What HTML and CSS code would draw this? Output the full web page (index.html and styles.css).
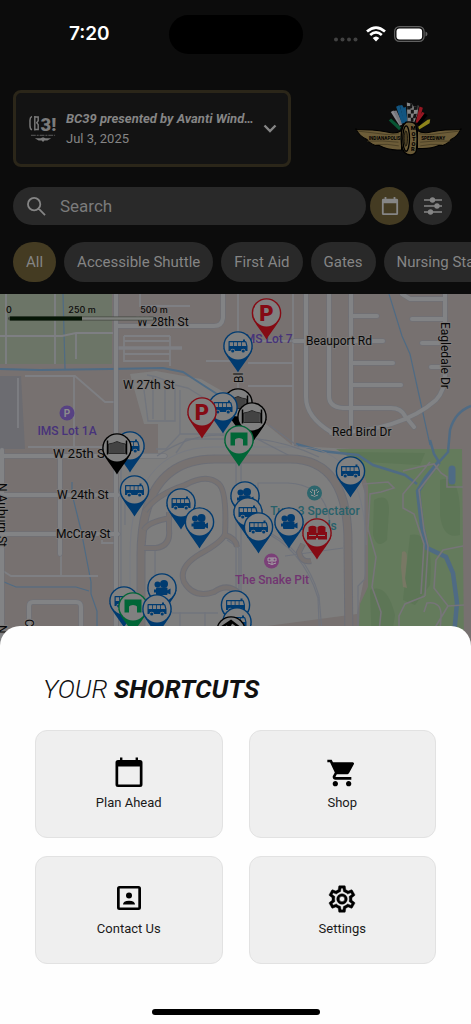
FILE: index.html
```html
<!DOCTYPE html>
<html lang="en">
<head>
    <meta charset="UTF-8">
    <meta name="viewport" content="width=device-width, initial-scale=1.0">
    <title>IMS Map</title>
    <link rel="stylesheet" href="styles.css">
</head>
<body>
    <header class="top">
        <div class="status-bar">
            <span class="time">7:20</span>
            <span class="island"></span>
            <span class="status-icons">
                <svg class="dots" viewBox="0 0 24 5"><circle cx="2" cy="2.5" r="2"/><circle cx="8.5" cy="2.5" r="2"/><circle cx="15" cy="2.5" r="2"/><circle cx="21.5" cy="2.5" r="2"/></svg>
                <svg class="wifi" viewBox="0 0 20 16" fill="none" stroke="#fff" stroke-width="2.700"><path d="M1 5.600Q10-2.400 19 5.600M4.200 9Q10 3.800 15.800 9"/><path d="M10 15.500 6.700 12Q10 9 13.300 12Z" fill="#fff" stroke="none"/></svg>
                <svg class="battery" viewBox="0 0 34 16"><rect x=".6" y=".6" width="29.500" height="14.800" rx="4.800" fill="none" stroke="#606060" stroke-width="1.200"/><rect x="2.500" y="2.500" width="25.600" height="11" rx="3" fill="#fff"/><path d="M31.500 5.500q2 .8 2 2.500t-2 2.500z" fill="#606060"/></svg>
            </span>
        </div>

        <div class="event-row">
            <button class="event">
                <svg class="event-logo" viewBox="0 0 30 30">
                    <path d="M3 2Q1 3 1 6v5q0 4 2 5M6 1.500v15M6 2.500h3.500v4l-1.500 2 1.500 2v5H6" fill="none" stroke="#7b7b7b" stroke-width="1.500"/>
                    <text x="12" y="17" class="event-mark">3!</text>
                    <path d="M2 21.500h25" stroke="#5e5e5e" stroke-width="1" stroke-dasharray="5 1 2 1"/>
                    <path d="M6 24.500h6l2.500-1 2.500 1h6l-4 2.500h-3l-1.500 1.500L13 27h-3z" fill="#7b7b7b"/>
                </svg>
                <span class="event-text">
                    <span class="event-name">BC39 presented by Avanti Wind…</span>
                    <span class="event-date">Jul 3, 2025</span>
                </span>
                <svg class="chevron" viewBox="0 0 14 9"><path d="m1.500 1.500 5.500 5.500 5.500-5.500" fill="none" stroke="#858585" stroke-width="2.400"/></svg>
            </button>
            <svg class="ims-logo" viewBox="46 50 320 164" role="img" aria-label="Indianapolis Motor Speedway">
                <path d="m147 108 7-6 30 27-6 8z" fill="#075433"/>
                <path d="m153 83 8-5 26 42-8 4z" fill="#8a8a8f"/>
                <path d="m161 80 9-2 18 38-8 4z" fill="#77777d"/>
                <path d="m169 67 10-5 16 52-9 4z" fill="#125580"/>
                <path d="m180 63 7-1 5 8 6-3 5 46-10 3z" fill="#125580"/>
                <path d="m201 54 15 4 6 9 14-4-3 26-10 24h-20z" fill="#858585"/>
                <path d="M202 65h10v10h-10zM212 55l6 5-1 12-7-1zM213 76h9v11h-9zM222 67l12-3-1 12-11 1zM204 88h9v12h-9zM222 89l9-1-4 14-8-2zM213 100h8v12h-8z" fill="#151515"/>
                <path d="m239 66 10 4-8 28-13 14z" fill="#961722"/>
                <path d="m247 83 7 3-19 30-8-3z" fill="#961722"/>
                <path d="m255 87 8 5-25 33-8-7z" fill="#000"/>
                <path d="m263 106 8-2-2 12-31 19-3-8z" fill="#8e841b"/>
                <path d="M48 135q55 0 90 7 30 8 47-4v58h-13q-29 0-55-14l-10 1q-20-8-25-18-24-10-34-34z" fill="#6c5c38" stroke="#000" stroke-width="3"/>
                <path d="M363 135q-52 0-86 7-29 7-44-4v54h15q27 0 50-10l10 1q20-8 25-18 22-10 30-34z" fill="#6c5c38" stroke="#000" stroke-width="3"/>
                <path d="M55 140q48 5 84 10l39-2M82 170q43-3 94 3M107 180q36-3 70 4M357 140q-46 5-82 10l-37-2M331 170q-42-3-90 3M307 180q-35-3-66 4" fill="none" stroke="#3f361f" stroke-width="2"/>
                <path d="M199 113q22-3 29 9 7 36 1 78-8 15-27 9-18-7-18-48 0-38 15-48z" fill="#6c5c38" stroke="#000" stroke-width="4"/>
                <ellipse cx="199" cy="162" rx="10" ry="38" fill="none" stroke="#000" stroke-width="4"/>
                <ellipse cx="198" cy="162" rx="5" ry="23" fill="#4c4024" stroke="#000" stroke-width="2"/>
                <text x="87" y="165" class="logo-text">INDIANAPOLIS</text>
                <text x="244" y="165" class="logo-text">SPEEDWAY</text>
                <g class="logo-motor"><text x="220" y="137">M</text><text x="221" y="153">O</text><text x="222" y="168">T</text><text x="221" y="183">O</text><text x="219" y="199">R</text></g>
            </svg>
        </div>

        <div class="search-row">
            <label class="search">
                <svg viewBox="0 0 20 20"><path d="M12 12l7 7M14 7.500a6.500 6.500 0 1 1-13 0 6.500 6.500 0 0 1 13 0z" fill="none" stroke="#858585" stroke-width="1.900"/></svg>
                <input type="search" placeholder="Search" aria-label="Search">
            </label>
            <button class="round gold" aria-label="Calendar">
                <svg viewBox="0 0 18 20"><path d="M3 0h2v2h8V0h2v2h1.500Q18 2 18 3.500v15q0 1.500-1.500 1.500h-15Q0 20 0 18.500v-15Q0 2 1.500 2H3zM2 7v11h14V7z" fill="#858585" fill-rule="evenodd"/></svg>
            </button>
            <button class="round" aria-label="Filters">
                <svg viewBox="0 0 18 18"><path d="M0 3h18M0 9h18M0 15h18" stroke="#858585" stroke-width="1.700"/><g fill="#858585"><circle cx="8.500" cy="3" r="2.700"/><circle cx="13" cy="9" r="2.700"/><circle cx="6.500" cy="15" r="2.700"/></g></svg>
            </button>
        </div>

        <nav class="chips">
            <button class="chip gold">All</button>
            <button class="chip">Accessible Shuttle</button>
            <button class="chip">First Aid</button>
            <button class="chip">Gates</button>
            <button class="chip">Nursing Station</button>
        </nav>
    </header>

    <main class="map">
        <svg class="map-canvas" viewBox="0 294 471 352" preserveAspectRatio="xMidYMin slice">
            <defs>
                <g id="pin">
                    <path d="M-14.500 2C-13 10-5 18 0 26.500 5 18 13 10 14.500 2z"/>
                    <circle r="14.800"/>
                    <circle r="13.400" fill="#808080"/>
                </g>
                <g id="bus">
                    <use href="#pin" fill="#003b70"/>
                    <path d="M-9-5H5V-6.500H7V-5q1.200 0 1.500 1L9.500 0v5H7.500a2.300 2.300 0 0 0-4.600 0H-3a2.300 2.300 0 0 0-4.600 0H-9.500v-9.500zM-8.300-3.800V0h3.500v-3.800zM-4-3.800V0H-.8v-3.800zM0-3.800V0h3.200v-3.800zM4-3.800V0h4.300L7.300-3.800z" fill="#003b70" fill-rule="evenodd"/>
                    <circle cx="-5.300" cy="5" r="1.600" fill="#003b70"/>
                    <circle cx="5.200" cy="5" r="1.600" fill="#003b70"/>
                </g>
                <g id="camera">
                    <use href="#pin" fill="#003b70"/>
                    <g fill="#003b70"><circle cx="-4.500" cy="-3.500" r="3"/><circle cx="2" cy="-4" r="4"/><rect x="-6" y="-.5" width="11.500" height="7.500" rx="1"/><path d="m4 3 4.500-2.500v6L4 4.500zM-8 1.500h3v3h-3z"/></g>
                </g>
                <g id="gate">
                    <use href="#pin" fill="#000"/>
                    <path d="M-9.500-7.500v14M9.500-7.500v14" stroke="#000" stroke-width="1.500"/>
                    <path d="M-8.500-4Q-4-4.500 0-6.500 4-4.500 8.500-4v9.500h-17z" fill="#4d4d4d" stroke="#1b1b1b" stroke-width=".8"/>
                    <path d="M-6-4V5M-4-4V5M-2-5V5M0-6V6M2-5V5M4-4V5M6-4V5" stroke="#2c2c2c" stroke-width=".6"/>
                </g>
                <g id="tunnel">
                    <use href="#pin" fill="#006637"/>
                    <path d="M-8.500-7.500h17v13H4V-.5Q3-2 0-2T-4-.5v6h-4.500z" fill="#006637"/>
                </g>
                <g id="parking">
                    <use href="#pin" fill="#850b14"/>
                    <text y="8" class="pin-letter">P</text>
                </g>
                <g id="seats">
                    <use href="#pin" fill="#850b14"/>
                    <path d="M-8.500-6q4-2.500 8 0v8h-8zM.5-6q4-2.500 8 0v8h-8zM-10-1h2v4H-1V0H1v3h7v-4h2v7.500H1V5h-2v1.500h-9z" fill="#850b14"/>
                </g>
                <!-- every street is drawn twice, casing and fill -->
                <g id="streets">
                    <path d="M116 294v352M2 450v196M60 454v100M0 456h165M0 495h118M0 534h118M116 326h98q8 0 9-8v-24"/>
                    <path d="M306 294v103q0 20 25 35M329 294v102q0 11 14 12h48q10 0 14 8l9 11M351 294v137M331 433q70-2 105-33 9-10 9-25v-81"/>
                    <path d="M351 316h26M351 341h32M351 363h42M351 385h50M412 319h33M422 343h22M431 367h13M294 341h12M402 294l8 5h34M29 646v-40q0-4 4-4h43q5 0 5 5v39"/>
                </g>
                <path id="track" d="M141 646v-90Q141 459 215 459h75q59 0 58 86l1 101"/>
                <g id="infield">
                    <path d="M145 511q12-17 40-26 22-12 34-1 8 8 6 50-3 8-25 20-22 13-16 28 10 17 30 10 14-10 26 2"/>
                    <path d="M144 548h12q15-2 13-19v-17M144 530q4-8 26-12M225 535q11 3 12 12"/>
                </g>
            </defs>

            <!-- land -->
            <rect y="294" width="471" height="352" fill="#777170"/>
            <path d="M0 294h112v70H0z" fill="#6c7567"/>
            <path d="M0 376h21l4 73H0z" fill="#6c6c71"/>
            <path d="M119 646V453h39V424H144l-14-50 26-3 45 8 35 20 30 25 27 22 21 1 38 2 13 45v80l-8 40z" fill="#7e7e7e"/>
            <path d="M336 449h126l2 197H358l2-42 8-17V486l-8-22z" fill="#647b5c"/>
            <g fill="#5d7656"><path d="M345 452l80 1-5 12-55-3zM374 500q15-8 15 10l-2 30q-10 10-14-5zM410 535q25-5 20 50l-15 20-12-5zM440 480q20-8 20 35v20q-17 5-20-20zM370 590q17-8 25 25l-5 31h-18z"/></g>
            <path d="M402 552q5-3 5 6l-2 20 2 10-4-1-2-20z" fill="#787864"/>

            <!-- water -->
            <g fill="none" stroke="#4f6b84">
                <path d="M0 369l40 1 70-1 53-1 20 4 20 13 14 9" stroke-width="2"/>
                <path d="M63 294l2 75M389 294l13 42 8 18 20 91" stroke-width="1.200"/>
                <path d="M72 482v12l9 36 10 52v12l6 17v30M4 582l12 5h60l13 4" stroke-width="1.200"/>
                <path d="M296 444l25 7 37 4 15 10 32 10 12 9" stroke-width="2.500"/>
                <path d="M430 440l4 14 5 8 9-10 2-22q5-18 21-24" stroke-width="2.500"/>
                <path d="M439 462l-13 16-8 13 4 35 5 22 19 9 7 16 4 30-4 43" stroke-width="4.500"/>
                <path d="M452 469v12" stroke-width="7" stroke-linecap="round"/>
            </g>

            <!-- minor roads -->
            <g fill="none" stroke="#7e7f83" stroke-width="1.800">
                <path d="M6 294v70M55 294v70M76 333v26M0 336h62l14-3h37M25 376h50l30 26h10M18 378v50M74 376v70M28 447h84M124 336h46M124 341h46M124 354h46M124 361h46M124 336v26M170 336v30M140 294v12h50M293 294v155M238 294v130M206 361h30M248 363h45M248 386h45M248 341h45M3 571l8 5h87M61 554v22M102 540v3h15"/>
                <path d="M114 348h68" stroke-width="3.500"/>
            </g>
            <g fill="none" stroke="#71757d" stroke-width="1.300">
                <path d="M144 390l4 31h27v-32q-10-12-28-14M175 385l13 3 16 10 17 12M153 377v42M165 382v38M180 390v44l-14 15h-10M180 434h60M176 453l10-14h50M180 612v34M205 612v34M165 613h53M121 450v190M125 500v25"/>
            </g>

            <use href="#streets" class="street-casing"/>
            <use href="#streets" class="street-fill"/>

            <!-- speedway track and infield roads -->
            <g fill="none">
                <path d="M130 646v-90Q130 448 213 447h85q66 0 68 98" stroke="#777a82"/>
                <path d="M157 456q40-27 80-19 45 2 82 20M236 460v186M241 462v184M258 505v-22h30q38 2 42 40M227 540l12 8v80M260 530q43 18 58 68l2 48M264 530q41 18 55 66l4 48M285 556l58-8M365 485v94l-7 7v40M155 550v36M240 430l50 26M269 425l30 22" stroke="#6f737c" stroke-width="1.200"/>
                <use href="#track" stroke="#6c6e76" stroke-width="9"/>
                <use href="#track" stroke="#777271" stroke-width="7"/>
                <use href="#infield" stroke="#6c6e76" stroke-width="6"/>
                <use href="#infield" stroke="#777271" stroke-width="4"/>
                <path d="M303 544l-4 8q2 11 12 9" stroke="#6c6e76" stroke-width="6"/>
                <path d="M303 544l-4 8q2 11 12 9" stroke="#777271" stroke-width="4"/>
            </g>

            <!-- park paths -->
            <g fill="none" stroke="#777579" stroke-width="1.600">
                <path d="M363 484l25-2 6 6-13 4-11 2-2 35 8 28-4 30 9 25-3 30M430 462l-10 12-17 20v14l11 6 10 30-3 50M403 471l16-4 15-3 7 9 6 4v10h16M439 464l-20 26 5 40 4 16-3 50M463 546l-20 4-7 10-2 28 14 18 16-1M448 606l-12 20 4 20M425 596l-20 8-6 12v30M424 612l3-9q15-2 14 14l-2 29"/>
            </g>

            <!-- places -->
            <g class="place">
                <circle cx="67" cy="413" r="7.500" fill="#574283"/>
                <text x="67" y="417" class="place-icon">P</text>
                <text x="67" y="435" fill="#47337a">IMS Lot 1A</text>
                <text x="267" y="343" fill="#47337a">IMS Lot 7</text>
                <circle cx="314.500" cy="493" r="7.500" fill="#2d666d"/>
                <path d="M311 495q3 1 3.500 1.500.5-.5 3.500-1.500M314.500 495v-5M310 491l2 2M319 491l-2 2M312 489l1 2M317 489l-1 2" stroke="#989898" fill="none"/>
                <text x="315" y="515" fill="#28616a">Turn 3 Spectator</text>
                <text x="315" y="530" fill="#28616a">Mounds</text>
                <circle cx="271.500" cy="561" r="7.500" fill="#7b4078"/>
                <path d="M268 558h3v3h-3zM273 558h3v3h-3zM268 563q4 3 8 0M272 557v7" stroke="#a5a5a5" fill="none"/>
                <text x="272" y="584" fill="#713571">The Snake Pit</text>
            </g>
            <g class="street-name">
                <text x="137" y="326">W 28th St</text>
                <text x="123" y="389">W 27th St</text>
                <text x="53" y="458" class="major">W 25th St</text>
                <text x="57" y="499">W 24th St</text>
                <text x="56" y="538">McCray St</text>
                <text x="306" y="345">Beauport Rd</text>
                <text x="332" y="436">Red Bird Dr</text>
                <text transform="translate(441 322) rotate(90)">Eagledale Dr</text>
                <text transform="translate(-2 483) rotate(90)">N Auburn St</text>
                <text transform="translate(243 383) rotate(-90)">Bl</text>
                <text transform="translate(25 619) rotate(90)">Ct</text>
                <text transform="translate(-2 625) rotate(90)">N</text>
            </g>

            <!-- scale -->
            <path d="M10 318.500h143" stroke="#454842" stroke-width="4" stroke-linecap="round"/>
            <path d="M82 318.500h71" stroke="#7e807d" stroke-width="2.500"/>
            <path d="M10 318.500h72" stroke="#051505" stroke-width="4"/>
            <g class="scale"><text x="9" y="313">0</text><text x="82" y="313">250 m</text><text x="154" y="313">500 m</text></g>

            <!-- pins -->
            <use href="#parking" x="266.500" y="313"/>
            <use href="#bus" x="238" y="346"/>
            <use href="#gate" x="238" y="403"/>
            <use href="#bus" x="223" y="407"/>
            <use href="#parking" x="202" y="412"/>
            <use href="#gate" x="252" y="417"/>
            <use href="#tunnel" x="239" y="440"/>
            <use href="#bus" x="130" y="446"/>
            <use href="#gate" x="117" y="448"/>
            <use href="#bus" x="350.500" y="471"/>
            <use href="#bus" x="134.500" y="490"/>
            <use href="#camera" x="245" y="496"/>
            <use href="#bus" x="181" y="503"/>
            <use href="#bus" x="248" y="512"/>
            <use href="#camera" x="199.500" y="522"/>
            <use href="#camera" x="289" y="522"/>
            <use href="#bus" x="258.500" y="527"/>
            <use href="#seats" x="317" y="533"/>
            <use href="#camera" x="162" y="588"/>
            <use href="#bus" x="124" y="601"/>
            <use href="#bus" x="235.500" y="605"/>
            <use href="#tunnel" x="133" y="607"/>
            <use href="#bus" x="157" y="609"/>
            <use href="#bus" x="237" y="622"/>
            <g transform="translate(231 631)">
                <use href="#pin"/>
                <path d="M-9-4 0-10 9-3M-4-7 5 0M1-9-6 0" fill="none" stroke="#000" stroke-width="2.500"/>
            </g>
        </svg>
    </main>

    <section class="sheet">
        <h1>YOUR <b>SHORTCUTS</b></h1>
        <div class="shortcuts">
            <button class="shortcut">
                <svg viewBox="0 0 32 32"><path d="M7 .5h2.400V3h13.200V.5H25V3h2q2.500 0 2.500 2.500v22q0 2.500-2.500 2.500H5q-2.500 0-2.500-2.500v-22Q2.500 3 5 3h2zM5.200 9.500V27q0 .5.500.5h20.600q.5 0 .5-.5V9.500z" fill-rule="evenodd"/></svg>
                <span>Plan Ahead</span>
            </button>
            <button class="shortcut">
                <svg viewBox="0 0 24 24"><path d="M7 18c-1.100 0-2 .9-2 2s.9 2 2 2 2-.9 2-2-.9-2-2-2zM1 2v2h2l3.600 7.590-1.350 2.450c-.16.280-.25.610-.25.960 0 1.100.9 2 2 2h12v-2H7.420c-.14 0-.25-.11-.25-.25l.03-.12.9-1.630h7.450c.75 0 1.410-.41 1.750-1.030l3.580-6.490A1 1 0 0 0 20 4H5.210l-.94-2H1zm16 16c-1.100 0-2 .9-2 2s.9 2 2 2 2-.9 2-2-.9-2-2-2z"/></svg>
                <span>Shop</span>
            </button>
            <button class="shortcut">
                <svg viewBox="0 0 32 32"><path d="M6.500 3h19Q28 3 28 5.500v19q0 2.500-2.500 2.500h-19Q4 27 4 24.500v-19Q4 3 6.500 3zm.2 2.500v19h18.600v-19zM10 21.500q0-3.800 6-3.800t6 3.800z" fill-rule="evenodd"/><circle cx="16" cy="12.500" r="3"/></svg>
                <span>Contact Us</span>
            </button>
            <button class="shortcut">
                <svg viewBox="0 0 24 24"><path d="M19.430 12.980c.04-.32.070-.64.070-.98s-.03-.66-.07-.98l2.110-1.650c.19-.15.240-.42.120-.64l-2-3.460a.5.5 0 0 0-.61-.22l-2.490 1c-.52-.4-1.080-.73-1.690-.98l-.38-2.650A.49.490 0 0 0 14 2h-4c-.25 0-.46.180-.49.420l-.38 2.650c-.61.250-1.170.590-1.690.98l-2.490-1a.5.5 0 0 0-.61.220l-2 3.460c-.13.220-.07.490.12.640l2.110 1.650c-.04.320-.07.650-.07.980s.03.660.07.980l-2.110 1.650c-.19.150-.24.420-.12.640l2 3.460c.12.220.39.300.61.220l2.490-1c.52.400 1.080.730 1.690.980l.38 2.650c.03.240.24.420.49.420h4c.25 0 .46-.18.490-.42l.38-2.650c.61-.25 1.170-.59 1.690-.98l2.490 1a.5.5 0 0 0 .61-.22l2-3.460c.12-.22.070-.49-.12-.64zm-1.980-1.710c.07.500.07.960 0 1.460l-.14 1.130 1.970 1.540-.7 1.210-2.310-.92-.91.700c-.43.320-.84.560-1.250.730l-1.060.43-.36 2.450h-1.380l-.35-2.450-1.060-.43a5.700 5.700 0 0 1-1.230-.71l-.91-.72-2.340.93-.7-1.210 1.970-1.540-.14-1.130c-.07-.52-.07-.97 0-1.470l.14-1.130-1.970-1.540.7-1.210 2.310.92.910-.7c.43-.32.840-.56 1.250-.73l1.060-.43.360-2.450h1.380l.35 2.450 1.060.43c.43.180.83.410 1.230.71l.91.720 2.340-.93.700 1.210-1.970 1.540zM12 8a4 4 0 1 0 0 8 4 4 0 0 0 0-8zm0 6a2 2 0 1 1 0-4 2 2 0 0 1 0 4z" stroke="#000" stroke-width=".3"/></svg>
                <span>Settings</span>
            </button>
        </div>
        <div class="home-bar"></div>
    </section>
</body>
</html>
```
FILE: styles.css
```css
* {
    box-sizing: border-box;
}
body {
    margin: 0;
    min-height: 100vh;
    display: flex;
    flex-direction: column;
    font-family: Roboto, "Liberation Sans", sans-serif;
    background: #0c0c0c;
    overflow-x: hidden;
}
button {
    font-family: inherit;
    border: none;
    padding: 0;
    cursor: pointer;
}
svg {
    display: block;
    flex-shrink: 0;
}

/* header */
.top {
    background: #0c0c0c;
    color: #858585;
    padding-bottom: 12px;
}
.status-bar {
    height: 68px;
    display: grid;
    grid-template-columns: 1fr 134px 1fr;
    align-items: center;
}
.time {
    color: #fff;
    font: 600 19px/24px Inter, sans-serif;
    text-align: center;
    padding-left: 10px;
}
.island {
    height: 39px;
    border-radius: 20px;
    background: #000;
}
.status-icons {
    display: flex;
    align-items: center;
    justify-content: flex-end;
    gap: 8px;
    padding-right: 43px;
}
.dots {
    width: 24px;
    height: 5px;
    fill: #424242;
    margin-top: 10px;
}
.wifi {
    width: 20px;
    height: 16px;
}
.battery {
    width: 34px;
    height: 16px;
}
.event-row {
    display: flex;
    justify-content: space-between;
    align-items: center;
    padding: 22px 9px 20px 13px;
}
.event {
    flex: 0 1 278px;
    min-width: 0;
    height: 77px;
    display: flex;
    align-items: center;
    gap: 8px;
    padding: 0 11px 0 13px;
    border: 3px solid #2b2619;
    border-radius: 8px;
    background: #131313;
    color: #858585;
    text-align: left;
}
.event-logo {
    width: 29px;
    height: 30px;
}
.event-mark {
    font: 900 19px Roboto, sans-serif;
    fill: #7b7b7b;
}
.event-text {
    flex: 1;
    min-width: 0;
    display: flex;
    flex-direction: column;
}
.event-name,
.event-date {
    font-size: 13px;
    line-height: 20px;
    white-space: nowrap;
}
.event-name {
    font-weight: 700;
    font-style: italic;
}
.chevron {
    width: 14px;
    height: 9px;
}
.ims-logo {
    width: 107px;
    height: 55px;
}
.logo-text {
    font: 700 14px Roboto, sans-serif;
    fill: #000;
}
.logo-motor {
    font: 900 17px Roboto, sans-serif;
    fill: #000;
    text-anchor: middle;
}
.search-row {
    display: flex;
    gap: 4px;
    padding: 0 19px 17px 13px;
}
.search {
    flex: 1;
    min-width: 0;
    height: 38px;
    display: flex;
    align-items: center;
    gap: 14px;
    padding: 0 14px;
    border-radius: 19px;
    background: #292929;
}
.search svg {
    width: 19px;
    height: 19px;
}
.search input {
    flex: 1;
    min-width: 0;
    padding: 0;
    border: none;
    outline: none;
    background: none;
    color: #858585;
    font: 17px/24px Roboto, sans-serif;
}
.search input::placeholder {
    color: #7b7b7b;
}
.round {
    width: 39px;
    height: 38px;
    display: flex;
    align-items: center;
    justify-content: center;
    border-radius: 50%;
    background: #292929;
}
.round svg {
    width: 18px;
    height: 18px;
}
.chips {
    display: flex;
    gap: 8px;
    padding-left: 13px;
    overflow: hidden;
}
.chip {
    flex-shrink: 0;
    height: 40px;
    padding: 0 13px;
    border-radius: 20px;
    background: #292929;
    color: #858585;
    font-size: 15px;
}
.gold {
    background: #443b22;
}

/* map */
.map {
    flex: 1 0 352px;
    position: relative;
    background: #777170;
}
.map-canvas {
    position: absolute;
    width: 100%;
    height: 100%;
}
.street-casing,
.street-fill {
    fill: none;
    stroke-linecap: round;
}
.street-casing {
    stroke: #6d7179;
    stroke-width: 5px;
}
.street-fill {
    stroke: #828385;
    stroke-width: 4px;
}
.place {
    font: 500 12px Roboto, sans-serif;
    text-anchor: middle;
}
.place-icon {
    font: 700 10px Roboto, sans-serif;
    fill: #8c8c8c;
}
.street-name {
    font: 12px Roboto, sans-serif;
    fill: #080808;
    stroke: #7d7a79;
    stroke-width: 2px;
    paint-order: stroke;
}
.major {
    font-size: 13px;
}
.scale {
    font: 500 9px Inter, sans-serif;
    fill: #0c0c0c;
    text-anchor: middle;
}
.pin-letter {
    font: 900 22px Roboto, sans-serif;
    fill: #850b14;
    text-anchor: middle;
}

/* shortcuts */
.sheet {
    position: relative;
    margin-top: -20px;
    padding: 47px 35px 9px;
    border-radius: 20px 20px 0 0;
    background: #fefefe;
}
.sheet h1 {
    margin: 0 8px 25px;
    font-size: 26px;
    line-height: 32px;
    font-weight: 300;
    font-style: italic;
    color: #111;
}
.sheet h1 b {
    font-weight: 700;
}
.shortcuts {
    display: grid;
    grid-template-columns: 1fr 1fr;
    gap: 18px 26px;
}
.shortcut {
    height: 108px;
    display: flex;
    flex-direction: column;
    align-items: center;
    justify-content: center;
    gap: 6px;
    border: 1px solid #e2e2e2;
    border-radius: 12px;
    background: #efefef;
    color: #1a1a1a;
    font-size: 13px;
    line-height: 16px;
}
.shortcut svg {
    width: 32px;
    height: 32px;
    fill: #000;
}
.home-bar {
    width: 168px;
    height: 6px;
    margin: 45px auto 0;
    border-radius: 3px;
    background: #000;
}
```
